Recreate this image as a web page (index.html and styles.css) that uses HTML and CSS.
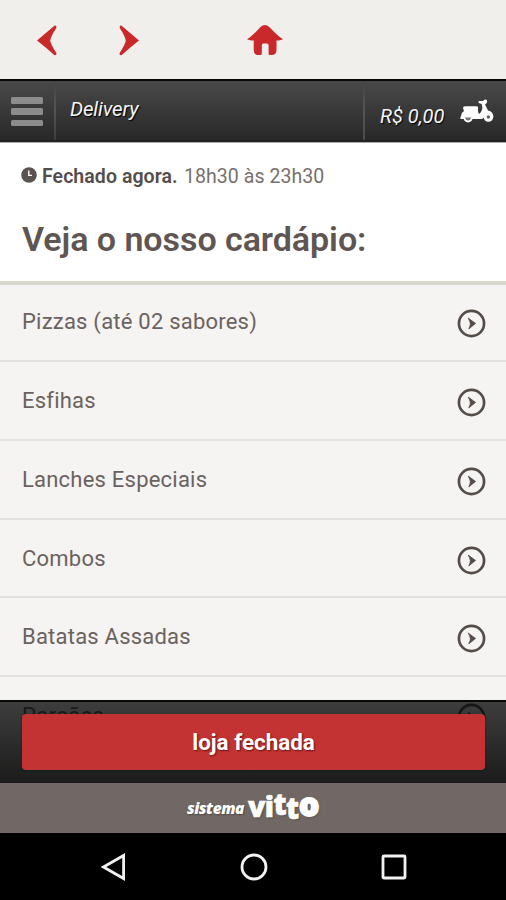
FILE: index.html
```html
<!DOCTYPE html>
<html lang="pt-BR">
<head>
<meta charset="utf-8">
<title>Delivery</title>
<link rel="stylesheet" href="styles.css">
</head>
<body>
<svg class="defs" width="0" height="0">
  <symbol id="go" viewBox="0 0 30 30">
    <circle cx="15" cy="15" r="13" fill="none" stroke="currentColor" stroke-width="2.8"/>
    <path d="M11.6 9.4 L19.2 14.9 L12.2 20.6 Q14 16.8 13.8 14.9 Q13.4 12.6 11.6 9.4Z" fill="currentColor" stroke="currentColor" stroke-width=".8"/>
  </symbol>
</svg>
<nav class="toolbar">
  <svg class="back" width="20" height="31" viewBox="0 0 20 31"><path d="M0 15.5 Q9 8 17.7.6 Q19.7 0 19.3 3 Q14 11 13.2 15.5 Q14 20 19.5 28.2 Q19.5 31 17.2 30 Q9 22.5 0 15.5Z"/></svg>
  <svg class="forward" width="20" height="31" viewBox="0 0 20 31"><path d="M20 15.5 Q11 8 2.3.6 Q.3 0 .7 3 Q6 11 6.8 15.5 Q6 20 .5 28.2 Q.5 31 2.8 30 Q11 22.5 20 15.5Z"/></svg>
  <svg class="home" width="36" height="31" viewBox="0 0 36 31"><path d="M0 14.3 C5 11 9 6.8 13.5 2 Q17.8-1.8 22.3 2 C27 6.8 31 11 36 14.3 Q33 16 29.5 15.2 V25 Q29.5 30 24.5 30 H23 Q21.6 30 21.6 28.5 V20.5 Q21.6 18.4 19.8 18.4 H16.5 Q14.8 18.4 14.8 20.5 V28.5 Q14.8 30 13.3 30 H11.5 Q6.7 30 6.7 25 V15.2 Q3 16 0 14.3Z"/></svg>
</nav>
<header class="header">
  <div class="menu"><i></i><i></i><i></i></div>
  <div class="title"><span>Delivery</span></div>
  <div class="cart"><span>R$ 0,00</span>
    <svg width="34" height="24" viewBox="0 0 34 24">
      <path d="M3 9 Q3 7.2 5 7.2 H16 Q18.8 7.2 18 9.6 Q17.6 13 19 15 Q21.5 13.6 22.4 9 L21.7 5 L18.6 3.9 V2 L23.2 2.1 Q23.7 0 26.4 .7 Q28 2.4 26.2 4.6 L25 5.4 L28 11.4 Q33.5 12.5 33.4 18.6 H27 L26.3 15 Q24 20 21 20 H1 Q-.3 19.4 1 17 Q1.2 13.4 4 12 Z" fill="#fff"/>
      <path d="M4.4 18.5 a3.6 3.8 0 0 0 7.4 0" fill="#777" stroke="#fff" stroke-width="2"/>
      <circle cx="28.4" cy="18" r="3.3" fill="#666" stroke="#fff" stroke-width="3"/>
    </svg>
  </div>
</header>
<section class="intro">
  <p class="status"><svg width="16" height="16" viewBox="0 0 16 16"><circle cx="8" cy="8" r="7.8" fill="#5b5351"/><path d="M7.8 3.5V8.4H11" fill="none" stroke="#fff" stroke-width="1.4"/></svg><b>Fechado agora.</b><span>18h30 às 23h30</span></p>
  <h1><span>Veja o nosso cardápio:</span></h1>
</section>
<main class="list">
  <a class="row"><span>Pizzas (até 02 sabores)</span><svg class="go"><use href="#go"/></svg></a>
  <a class="row"><span>Esfihas</span><svg class="go"><use href="#go"/></svg></a>
  <a class="row"><span>Lanches Especiais</span><svg class="go"><use href="#go"/></svg></a>
  <a class="row"><span>Combos</span><svg class="go"><use href="#go"/></svg></a>
  <a class="row"><span>Batatas Assadas</span><svg class="go"><use href="#go"/></svg></a>
  <a class="row"><span>Porções</span><svg class="go"><use href="#go"/></svg></a>
</main>
<div class="action"><button>loja fechada</button></div>
<footer class="brand"><span class="sys">sistema</span><span class="vitto">vi<span class="t1">t</span><span class="t2">t</span><span class="o">o</span></span></footer>
<nav class="keys">
  <svg width="26" height="30" viewBox="0 0 26 30"><path d="M2.5 15 L22.6 3.5 V26.5Z"/></svg>
  <svg width="30" height="30" viewBox="0 0 30 30"><circle cx="15" cy="15" r="12"/></svg>
  <svg width="28" height="30" viewBox="0 0 28 30"><rect x="3" y="4" width="22" height="22" rx="1"/></svg>
</nav>
</body>
</html>
```

FILE: styles.css
```css
* { box-sizing: border-box; }
body {
  margin: 0;
  width: 506px;
  height: 900px;
  overflow: hidden;
  display: flex;
  flex-direction: column;
  font-family: Roboto, "Liberation Sans", sans-serif;
  color: #5f5755;
  background: #f6f4f2;
}
.defs { position: absolute; }
.toolbar {
  flex: 0 0 79px;
  display: flex;
  align-items: center;
  padding-left: 36.5px;
  padding-top: 1px;
  background: #f0efeb;
  fill: #c9292b;
}
.forward { margin-left: 62.5px; }
.home { margin-left: 107.5px; }
.header {
  flex: 0 0 63px;
  display: flex;
  border-top: 2px solid #090909;
  border-bottom: 2px solid #222;
  background: linear-gradient(#494949, #282828);
  box-shadow: 0 1px 0 #aaa;
  z-index: 1;
  color: #f4f4f4;
  font-style: italic;
  text-shadow: 1px 1px 1px #000;
}
.menu {
  width: 54px;
  display: flex;
  flex-direction: column;
  gap: 4.8px;
  padding: 16px 0 0 11px;
}
.menu i { width: 32px; height: 6.6px; border-radius: 1.5px; background: #8c8c8c; }
.title {
  flex: 1;
  border-left: 2px solid;
  border-image: linear-gradient(#444, #555 50%, #3d3d3d) 1;
  padding: 16px 0 0 14px;
  font-size: 20.5px;
  line-height: 24px;
  letter-spacing: -.15px;
}
.cart {
  width: 143px;
  display: flex;
  border-left: 2px solid;
  border-image: linear-gradient(#444, #555 50%, #4a4a4a) 1;
  padding: 23px 0 0 15px;
  font-size: 20px;
  line-height: 24px;
}
.cart span { width: 80px; }
.cart svg { margin-top: -5px; }
.intro {
  flex: 0 0 143px;
  padding: 23px 22px 0;
  background: #fff;
  border-bottom: 4px solid #dad7cf;
}
.status {
  margin: 0;
  display: flex;
  font-size: 19.5px;
  line-height: 24px;
  letter-spacing: .06px;
}
.status svg { margin: 2px 5px 0 -1px; }
.status b { width: 142px; font-weight: 600; color: #554d4b; white-space: nowrap; }
.status span { color: #77706e; }
h1 {
  margin: 29px 0 0;
  font-size: 34px;
  line-height: 42px;
  font-weight: 600;
  letter-spacing: -.05px;
  color: #5f5553;
}
.list { flex: 0 0 415px; min-height: 0; height: 415px; }
.row {
  height: 78.7px;
  display: flex;
  justify-content: space-between;
  padding: 25px 20px 0 22px;
  border-bottom: 2px solid #e3e1df;
  font-size: 22px;
  line-height: 28px;
  letter-spacing: .22px;
  color: #6a6260;
  background: #f6f4f2;
}
.row:first-child { height: 77.3px; padding-top: 23px; }
.row:last-child { border: 0; }
.go { width: 29px; height: 29px; margin-top: 1px; color: #544c49; }
.action {
  flex: 0 0 83px;
  position: relative;
  border-top: 2px solid #080808;
  padding: 12px 21px 0 22px;
  background: linear-gradient(rgba(4, 6, 5, .77), rgba(4, 4, 4, .9));
}
.action button {
  display: block;
  width: 100%;
  height: 56px;
  border: 0;
  border-radius: 4px;
  background: #c43333;
  box-shadow: 0 1px 2px #0d2222;
  color: #fff;
  font: 700 22.4px/54px Roboto, sans-serif;
  padding: 0;
  text-shadow: 1px 1px 2px #6c1111;
}
.brand {
  flex: 0 0 50px;
  display: flex;
  padding: 10px 0 0 187px;
  background: #716865;
  color: #fff;
  position: relative;
  text-shadow: 1px 1px 2px #504743;
  font-family: "Open Sans", sans-serif;
  line-height: 26px;
}
.sys { width: 61px; font-size: 15.5px; font-weight: 800; font-style: italic; letter-spacing: -.5px; padding-top: 2px; }
.vitto { font-size: 28.5px; font-weight: 800; letter-spacing: -.6px; white-space: nowrap; -webkit-text-stroke: .6px #fff; }
.vitto span { display: inline-block; }
.t1 { transform: translateY(-3px) scaleY(1.08); }
.t2 { transform: translateY(1px) scaleY(1.08); }
.o { -webkit-text-stroke: 1.6px #fff; transform: translate(1px, -2px) scale(1.12); }
.keys {
  flex: 0 0 67px;
  display: flex;
  justify-content: space-between;
  padding: 19px 98px 0 101px;
  background: #000;
  fill: none;
  stroke: #f2f2f2;
  stroke-width: 2.8;
  position: relative;
}
```
